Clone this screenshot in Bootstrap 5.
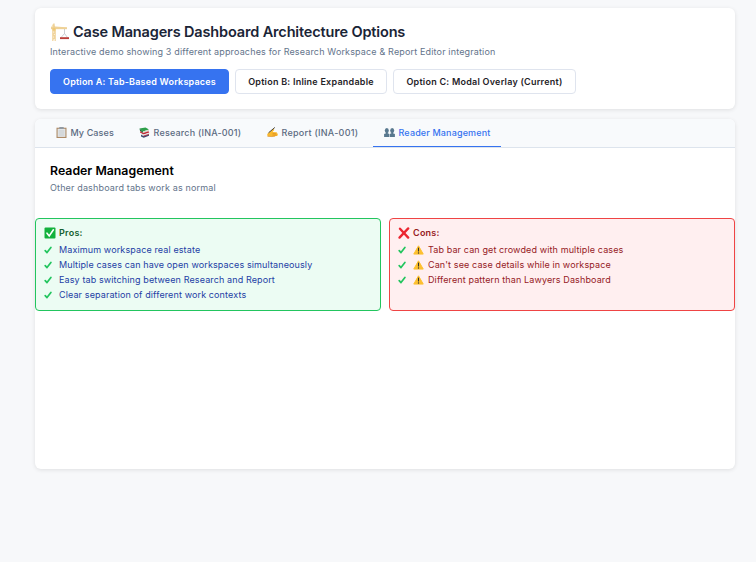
<!DOCTYPE html>
<html lang="en">
<head>
<meta charset="utf-8">
<meta name="viewport" content="width=device-width, initial-scale=1">
<title>Case Managers Dashboard Architecture Options</title>
<link href="https://cdn.jsdelivr.net/npm/bootstrap@5.3.0/dist/css/bootstrap.min.css" rel="stylesheet">
<style>
body{background:#f7f8fa;font-family:Inter,"Liberation Sans",sans-serif;font-size:9px;line-height:15px;letter-spacing:.12px;height:562px;overflow:hidden}
.page{width:700px;margin-left:35px;padding-top:8px}
.panel{background:#fff;border-radius:6px;box-shadow:0 1px 4px rgba(0,0,0,.1)}
.head-panel{height:101px;padding:15px;margin-bottom:10px}
.title{font-size:14.5px;line-height:18px;font-weight:600;color:#1a2436;letter-spacing:-.15px;margin:0 0 5px}
.title svg{width:19px;height:18px;margin-right:4px}
.muted{color:#64748b;line-height:12px;letter-spacing:.155px}
.options{margin-top:11px;gap:6px}
.opt{height:25px;border:1px solid #dfe4ee;border-radius:4px;background:#fff;color:#1f2328;font-size:9px;font-weight:600;line-height:15px;padding:0;white-space:nowrap;letter-spacing:.24px}
.opt.on{background:#3673f0;border-color:#3673f0;color:#fff;letter-spacing:.2px}
.wa{width:179px}.wb{width:152px}.wc{width:183px}
.tabs-panel{height:350px}
.tabbar{height:29px;background:#f8fafc;border-bottom:1px solid #dde4ed;border-radius:6px 6px 0 0;padding-left:10px;gap:4px}
.tab-item{height:28px;padding:0 0 0 11px;border:0;border-bottom:1px solid transparent;background:none;color:#5b6b81;font-size:9px;font-weight:500;white-space:nowrap;letter-spacing:.2px}
.tab-item svg{width:11px;height:11px;margin-right:3.5px;flex:none}
.tab-item.on{color:#3673f0;border-color:#3673f0;letter-spacing:.15px}
.t1{width:79px;letter-spacing:.1px}.t2{width:124px}.t3{width:113px;letter-spacing:.26px}.t4{width:128px}
.intro{height:70px;padding:15px 15px 0}
.intro h2{font-size:12.3px;line-height:16px;font-weight:600;color:#000;letter-spacing:0.02px;margin:0 0 3px}
.compare{gap:8px}
.note{flex:1;height:93px;border:1px solid;border-radius:4px;padding:7px 8px}
.pros{background:#ecfcf3;border-color:#22c55e;color:#2340a5}
.cons{background:#ffeff0;border-color:#ef4444;color:#96201f}
.note h3{font-size:9px;line-height:14px;font-weight:600;letter-spacing:.25px;margin:0 0 2px}
.note h3 svg{width:12px;height:12px;margin-right:3px}
.pros h3{color:#14602f}
.note .tick{width:8px;height:8px;margin-right:7px;flex:none}
.note .warn{width:11px;height:10px;margin-right:4px;flex:none}
</style>
<script src="https://cdn.jsdelivr.net/npm/bootstrap@5.3.0/dist/js/bootstrap.bundle.min.js"></script>
</head>
<body>
<svg width="0" height="0" class="d-none">
<symbol id="tick" viewBox="0 0 8 8"><path d="M1.2 4.6 3 6.6 6.9 1.4" fill="none" stroke="#22c55e" stroke-width="1.7" stroke-linecap="round" stroke-linejoin="round"/></symbol>
<symbol id="warn" viewBox="0 0 12 11"><path d="M6 .9 11.2 10H.8z" fill="#fdc02f" stroke="#fdc02f" stroke-width="1.1" stroke-linejoin="round"/><path d="M6 3.4v3.2" stroke="#333" stroke-width="1.2" stroke-linecap="round"/><circle cx="6" cy="8.8" r=".75" fill="#333"/></symbol>
</svg>
<main class="page">
<header class="panel head-panel">
<h1 class="title d-flex align-items-center"><svg viewBox="0 0 19 18"><path d="M2.8 18V4M5.2 18V4M2.8 16.5l2.4-2.5-2.4-2.5 2.4-2.5-2.4-2.5L5.2 4" fill="none" stroke="#f0d39a" stroke-width="1.2"/><path d="M3.2.5 1 4.2v2h16V4.4L4.8 3.2z" fill="#f5dfb2"/><path d="M4 .5v4M1 5h16" stroke="#e8c47d" stroke-width="1"/><path d="M2.5 5h3v2.5h-3z" fill="#efc875"/><path d="M14.5 6v4.5L11 14.6M14.5 10.5l3 4" fill="none" stroke="#aab0b8" stroke-width=".6"/><path d="M10 14.2h9v1.9h-9z" fill="#bb3f3a"/></svg><span>Case Managers Dashboard Architecture Options</span></h1>
<div class="muted">Interactive demo showing 3 different approaches for Research Workspace &amp; Report Editor integration</div>
<div class="options d-flex">
<button class="btn opt on wa">Option A: Tab-Based Workspaces</button>
<button class="btn opt wb">Option B: Inline Expandable</button>
<button class="btn opt wc">Option C: Modal Overlay (Current)</button>
</div>
</header>
<section class="panel tabs-panel">
<nav class="tabbar d-flex">
<button class="tab-item t1 d-flex align-items-center"><svg viewBox="0 0 11 11"><path d="M.5.7h10V11H.5z" fill="#ad8a66"/><path d="M1.6 1.8h7.8v8.1H1.6z" fill="#e2e5e7"/><path d="M3.3 0h4.4v2H3.3z" fill="#929aa2"/><path d="M2.7 4h5.6M2.7 6h5.6M2.7 8h5.6" stroke="#bcc1c6" stroke-width=".7"/></svg><span>My Cases</span></button>
<button class="tab-item t2 d-flex align-items-center"><svg viewBox="0 0 11 11"><path d="m.5 1.6 6-1.2L10 2.6 4 4.5z" fill="#2d9f49"/><path d="m.5 1.6 3.5 2.9v1.4L1 3.8z" fill="#176d35"/><path d="m4 4.5 6-1.9v1.3L4 6z" fill="#d7dacd"/><path d="m1.2 4 2.8 2 5.5-1.8.8 1.3-5.8 2L1.2 5.8z" fill="#c42836"/><path d="m2 6.3 2.5 1.2 5.8-1.6v1.2L4.5 9 2 7.5z" fill="#ddd"/><path d="m2 7.8 2.5 1.3 5.5-1.8v1.5l-5.3 2L2 9.5z" fill="#394c73"/><path d="m4.5 9.1 5.4-1.7" stroke="#bf2938" stroke-width=".8"/></svg><span>Research (INA-001)</span></button>
<button class="tab-item t3 d-flex align-items-center"><svg viewBox="0 0 11 11"><path d="M.2 7 3 4.7l3-2.5c.8-.4 1.5.3 1 1L5.5 5l3.8.2c1 .1 1 1 .2 1.2l1 .2c.8.5.5 1.2-.3 1.2.6.6.3 1.2-.4 1.2L5 9.6.5 9.3z" fill="#f9b82e"/><path d="m5.6 6.5 3.9.3M5.4 8l4.2.1M.5 9.3l4.5.3 3-.4" fill="none" stroke="#d8861b" stroke-width=".6"/><path d="M1.5 5.8 7.8.5" stroke="#464238" stroke-width="1"/></svg><span>Report (INA-001)</span></button>
<button class="tab-item t4 on d-flex align-items-center"><svg viewBox="0 0 11 11"><g fill="#58788e"><ellipse cx="2.8" cy="3.6" rx="2" ry="2.5"/><path d="M2 5h1.7v1.3l1.6.8v3H.1v-3L2 6.3z"/><ellipse cx="8.2" cy="3.6" rx="2" ry="2.5"/><path d="M7.4 5H9v1.3l1.9.8v3H5.8v-3l1.6-.8z"/></g></svg><span>Reader Management</span></button>
</nav>
<div class="intro">
<h2>Reader Management</h2>
<div class="muted">Other dashboard tabs work as normal</div>
</div>
<div class="compare d-flex">
<div class="note pros">
<h3 class="d-flex align-items-center"><svg viewBox="0 0 12 12"><rect x=".5" y=".5" width="11" height="11" rx="1" fill="#13b13d"/><path d="m3 6.2 2.2 2.8L9.4 2.8" fill="none" stroke="#fff" stroke-width="1.6" stroke-linecap="round"/></svg><span>Pros:</span></h3>
<ul class="list-unstyled mb-0">
<li class="d-flex align-items-center"><svg class="tick"><use href="#tick"/></svg><span>Maximum workspace real estate</span></li>
<li class="d-flex align-items-center"><svg class="tick"><use href="#tick"/></svg><span>Multiple cases can have open workspaces simultaneously</span></li>
<li class="d-flex align-items-center"><svg class="tick"><use href="#tick"/></svg><span>Easy tab switching between Research and Report</span></li>
<li class="d-flex align-items-center"><svg class="tick"><use href="#tick"/></svg><span>Clear separation of different work contexts</span></li>
</ul>
</div>
<div class="note cons">
<h3 class="d-flex align-items-center"><svg viewBox="0 0 12 12"><path d="m2 1.7 8.2 8.9M10.2 1.4 1.5 10.6" stroke="#eb2630" stroke-width="2.3" stroke-linecap="round"/></svg><span>Cons:</span></h3>
<ul class="list-unstyled mb-0">
<li class="d-flex align-items-center"><svg class="tick"><use href="#tick"/></svg><svg class="warn"><use href="#warn"/></svg><span>Tab bar can get crowded with multiple cases</span></li>
<li class="d-flex align-items-center"><svg class="tick"><use href="#tick"/></svg><svg class="warn"><use href="#warn"/></svg><span>Can't see case details while in workspace</span></li>
<li class="d-flex align-items-center"><svg class="tick"><use href="#tick"/></svg><svg class="warn"><use href="#warn"/></svg><span>Different pattern than Lawyers Dashboard</span></li>
</ul>
</div>
</div>
</section>
</main>
</body>
</html>
